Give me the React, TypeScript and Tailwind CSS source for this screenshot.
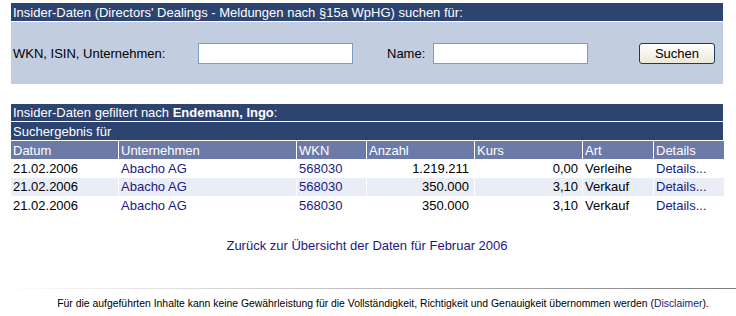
const rows = [
  { datum: '21.02.2006', firma: 'Abacho AG', wkn: '568030', anzahl: '1.219.211', kurs: '0,00', art: 'Verleihe' },
  { datum: '21.02.2006', firma: 'Abacho AG', wkn: '568030', anzahl: '350.000', kurs: '3,10', art: 'Verkauf' },
  { datum: '21.02.2006', firma: 'Abacho AG', wkn: '568030', anzahl: '350.000', kurs: '3,10', art: 'Verkauf' },
]

const cols = 'grid grid-cols-[107px_177px_69px_107px_107px_70px_70px] gap-x-px'

// Insider-Suche, alte Portal-Optik

export default function App() {
  return (
    <div className="w-[736px] h-[316px] bg-white text-[12px] leading-none text-black overflow-hidden" style={{ fontFamily: '"Liberation Sans", Arial, sans-serif' }}>
      <div className="pt-[3px] px-[11px] w-[734px]">
        <div className="h-[18px] bg-[#2e4470] text-white flex items-center px-[2px] text-[13px]">
          Insider-Daten (Directors' Dealings - Meldungen nach §15a WpHG) suchen für:
        </div>
        <div className="mt-px h-[62px] bg-[#c3cde0] flex items-center pl-[2px] text-[13px]">
          <span className="w-[185px]">WKN, ISIN, Unternehmen:</span>
          <input className="w-[155px] h-[21px] bg-white border border-[#7f9db9] outline-none" />
          <span className="ml-[34px] w-[46px]">Name:</span>
          <input className="w-[155px] h-[21px] bg-white border border-[#7f9db9] outline-none" />
          <button className="ml-[51px] w-[76px] h-[21px] rounded-[3px] border border-[#1c3a63] bg-gradient-to-b from-white to-[#ece9d8] text-[13px]">
            Suchen
          </button>
        </div>

        <div className="mt-[20px] bg-white">
          <div className="h-[17px] bg-[#2e4470] text-white flex items-center px-[2px] text-[13px]">
            <span>
              Insider-Daten gefiltert nach <b>Endemann, Ingo</b>:
            </span>
          </div>
          <div className="mt-px h-[18px] bg-[#2e4470] text-white flex items-center px-[2px] text-[13px]">
            Suchergebnis für
          </div>
          <div className={`${cols} mt-px h-[18px] text-white text-[13px]`}>
            {['Datum', 'Unternehmen', 'WKN', 'Anzahl', 'Kurs', 'Art', 'Details'].map((h) => (
              <div key={h} className="bg-[#6b7aa6] flex items-center px-[2px]">
                {h}
              </div>
            ))}
          </div>
          {rows.map((r, i) => {
            const bg = i % 2 === 1 ? 'bg-[#e9edf5]' : 'bg-white'
            return (
              <div key={i} className={`${cols} h-[18.5px] text-[13px]`}>
                <div className={`${bg} flex items-center px-[2px]`}>{r.datum}</div>
                <div className={`${bg} flex items-center px-[2px] text-[#1a1a80]`}>{r.firma}</div>
                <div className={`${bg} flex items-center px-[2px] text-[#1a1a80]`}>{r.wkn}</div>
                <div className={`${bg} flex items-center justify-end pr-[5px]`}>{r.anzahl}</div>
                <div className={`${bg} flex items-center justify-end pr-[4px]`}>{r.kurs}</div>
                <div className={`${bg} flex items-center px-[2px]`}>{r.art}</div>
                <div className={`${bg} flex items-center px-[2px] text-[#1a1a80]`}>Details...</div>
              </div>
            )
          })}
        </div>

        <div className="mt-[24px] text-center text-[#1a1a80] text-[13px]">
          Zurück zur Übersicht der Daten für Februar 2006
        </div>
      </div>

      <div className="mt-[36px] h-px bg-gradient-to-r from-white to-[#7d7d7d]" />
      <div className="mt-[10px] pl-[30px] text-center text-[10.4px]">
        Für die aufgeführten Inhalte kann keine Gewährleistung für die Vollständigkeit, Richtigkeit und Genauigkeit übernommen werden (
        <span className="text-[#1a1a80]">Disclaimer</span>).
      </div>
    </div>
  )
}
